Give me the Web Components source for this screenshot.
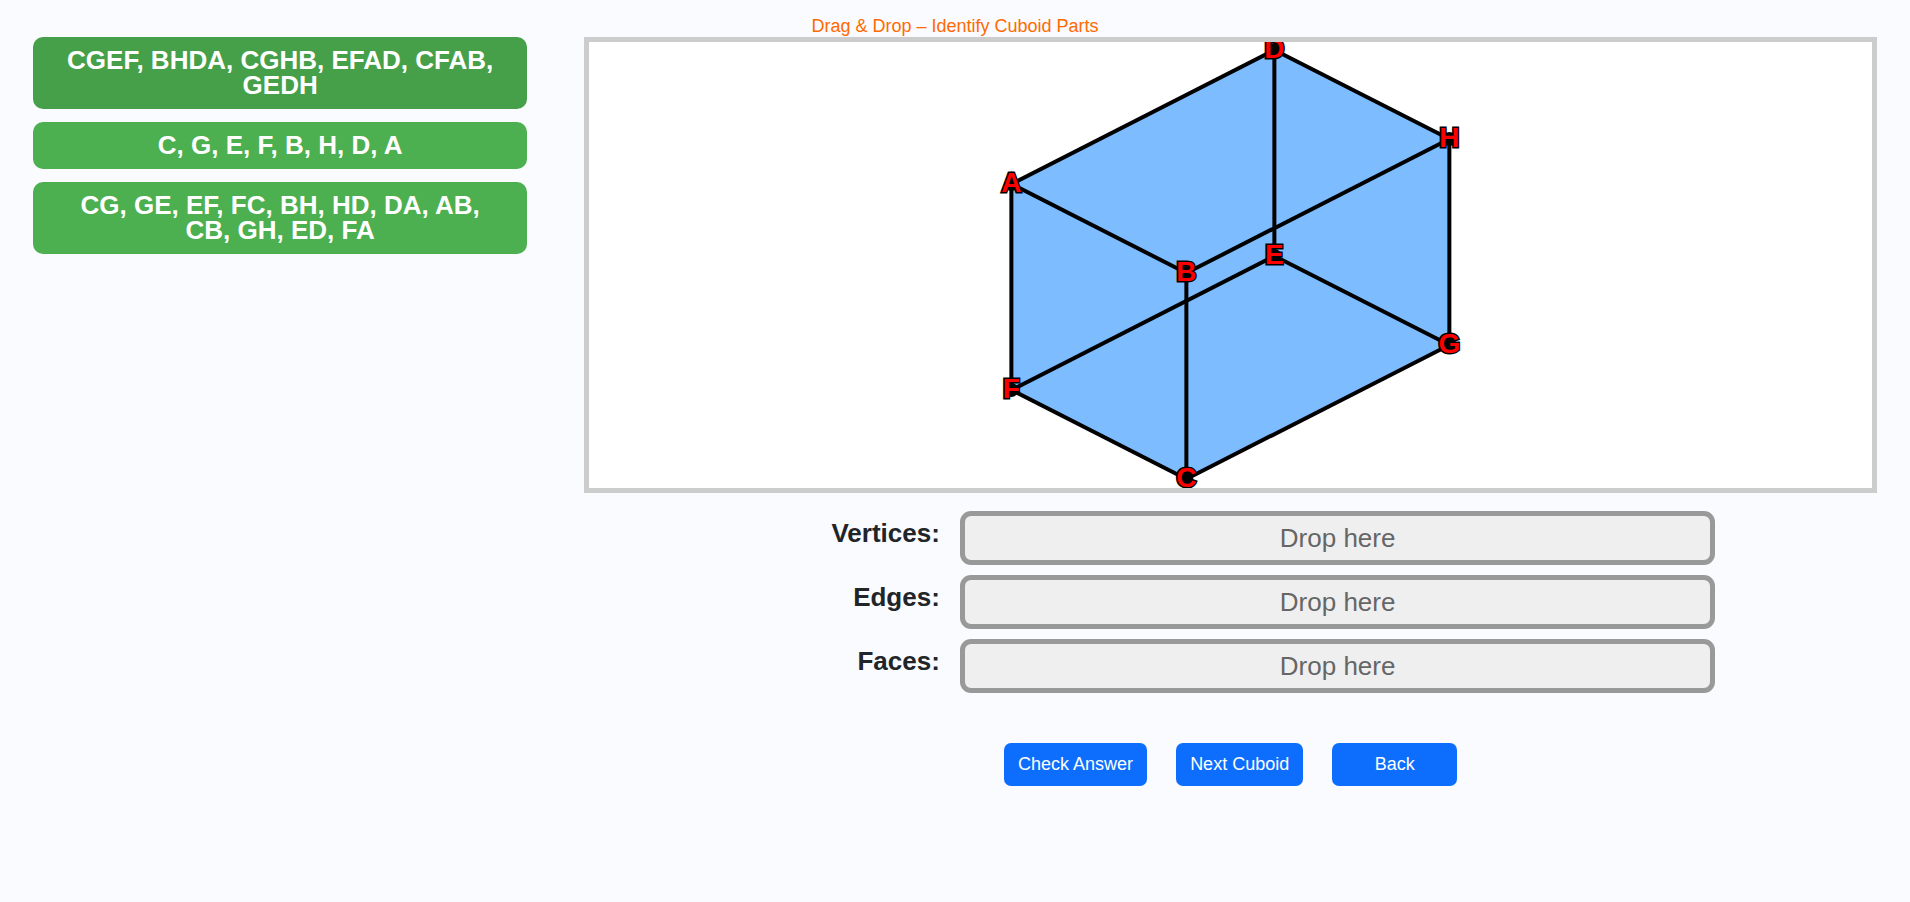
<!DOCTYPE html>
<html lang="en">
<head>
<meta charset="UTF-8">
<meta name="viewport" content="width=device-width, initial-scale=1.0">
<title>Drag &amp; Drop – Identify Cuboid Parts</title>
<style>
  body {
    margin: 0;
    background: #fafbff;
    color: #212529;
    font-family: Arial, "Liberation Sans", sans-serif;
  }
</style>
</head>
<body>
<cuboid-game>
  <span slot="title">Drag &amp; Drop – Identify Cuboid Parts</span>
  <drag-card slot="cards" kind="faces" active>CGEF, BHDA, CGHB, EFAD, CFAB, GEDH</drag-card>
  <drag-card slot="cards" kind="vertices">C, G, E, F, B, H, D, A</drag-card>
  <drag-card slot="cards" kind="edges">CG, GE, EF, FC, BH, HD, DA, AB, CB, GH, ED, FA</drag-card>
  <cuboid-figure slot="figure"></cuboid-figure>
  <drop-row slot="rows" kind="vertices">Vertices:</drop-row>
  <drop-row slot="rows" kind="edges">Edges:</drop-row>
  <drop-row slot="rows" kind="faces">Faces:</drop-row>
  <action-button slot="actions" action="check">Check Answer</action-button>
  <action-button slot="actions" action="next">Next Cuboid</action-button>
  <action-button slot="actions" action="back">Back</action-button>
</cuboid-game>

<script>
class DragCard extends HTMLElement {
    constructor() {
        super()
        this.attachShadow({ mode: 'open' })
    }

    connectedCallback() {
        this.draggable = true
        this.render()
        this.addEventListener('dragstart', (e) => {
            e.dataTransfer.setData('text/plain', this.getAttribute('kind'))
        })
    }

    render() {
        this.shadowRoot.innerHTML = `
      <style>
        :host {
          display: block;
          padding: 11px 24px;
          border-radius: 10px;
          background: #4caf50;
          color: #fff;
          font-size: 26px;
          font-weight: bold;
          line-height: 25px;
          text-align: center;
          cursor: grab;
          user-select: none;
        }
        :host([active]), :host(:hover) { background: #46a049; }
      </style>
      <slot></slot>
    `;
    }
}

class DropRow extends HTMLElement {
    constructor() {
        super()
        this.attachShadow({ mode: 'open' })
    }

    connectedCallback() {
        this.render()
        const zone = this.shadowRoot.querySelector('#zone')
        zone.addEventListener('dragover', (e) => e.preventDefault())
        zone.addEventListener('drop', (e) => {
            e.preventDefault()
            const kind = e.dataTransfer.getData('text/plain')
            const card = document.querySelector(`drag-card[kind="${kind}"]`)
            if (!card) return
            zone.textContent = card.textContent
            this.value = kind
        })
    }

    mark() {
        const zone = this.shadowRoot.querySelector('#zone')
        zone.className = this.value === this.getAttribute('kind') ? 'right' : 'wrong'
    }

    reset() {
        this.value = ''
        const zone = this.shadowRoot.querySelector('#zone')
        zone.className = ''
        zone.textContent = 'Drop here'
    }

    render() {
        this.shadowRoot.innerHTML = `
      <style>
        :host {
          display: grid;
          grid-template-columns: 8fr 17fr;
          column-gap: 20px;
          align-items: start;
          font-size: 26px;
        }
        label {
          font-weight: bold;
          line-height: 44px;
          text-align: right;
        }
        output {
          display: block;
          padding: 7px 12px;
          border: 5px solid #999;
          border-radius: 11px;
          background: #efefef;
          color: #666;
          line-height: 30px;
          text-align: center;
        }
        .right { border-color: #4caf50; }
        .wrong { border-color: #dc3545; }
      </style>
      <label for="zone"><slot></slot></label>
      <output id="zone">Drop here</output>
    `;
    }
}

class ActionButton extends HTMLElement {
    constructor() {
        super()
        this.attachShadow({ mode: 'open' })
    }

    connectedCallback() {
        this.render()
    }

    render() {
        this.shadowRoot.innerHTML = `
      <style>
        :host { display: block; }
        button {
          min-width: 125px;
          padding: 11px 14px;
          border: 0;
          border-radius: 7px;
          background: #0d6efd;
          color: #fff;
          font-family: inherit;
          font-size: 18px;
          line-height: 21px;
          cursor: pointer;
        }
        button:hover { background: #0b5ed7; }
      </style>
      <button type="button"><slot></slot></button>
    `;
    }
}

class CuboidFigure extends HTMLElement {
    constructor() {
        super()
        this.attachShadow({ mode: 'open' })
        this.points = {
            A: [-219, -81], B: [-44, 8], C: [-44, 214], D: [44, -215],
            E: [44, -9], F: [-219, 125], G: [219, 80], H: [219, -126]
        }
        this.edges = ['CG', 'GE', 'EF', 'FC', 'BH', 'HD', 'DA', 'AB', 'CB', 'GH', 'ED', 'FA']
    }

    connectedCallback() {
        this.render()
    }

    render() {
        const p = this.points
        const outline = ['A', 'D', 'H', 'G', 'C', 'F'].map((k) => p[k].join()).join(' ')
        const lines = this.edges.map(([a, b]) =>
            `<line x1="${p[a][0]}" y1="${p[a][1]}" x2="${p[b][0]}" y2="${p[b][1]}"/>`).join('')
        const dots = Object.values(p).map(([x, y]) => `<circle cx="${x}" cy="${y}" r="7"/>`).join('')
        const names = Object.keys(p).map((k) =>
            `<text x="${p[k][0]}" y="${p[k][1] + 8}">${k}</text>`).join('')

        this.shadowRoot.innerHTML = `
      <style>
        :host {
          display: block;
          border: 5px solid #ccc;
          background: #fff;
        }
        svg {
          display: block;
          width: 100%;
          height: 446px;
        }
        polygon { fill: #7dbdff; }
        line { stroke: #000; stroke-width: 4; }
        /* outline goes under the fill so the red stays full width */
        text {
          fill: #f00;
          stroke: #000;
          stroke-width: 3;
          paint-order: stroke;
          font-size: 28px;
          font-weight: bold;
          text-anchor: middle;
        }
      </style>
      <svg viewBox="-240 -223 480 446" role="img" aria-label="Cuboid">
        <polygon points="${outline}"/>
        ${lines}
        ${dots}
        ${names}
      </svg>
    `;
    }
}

class CuboidGame extends HTMLElement {
    constructor() {
        super()
        this.attachShadow({ mode: 'open' })
    }

    connectedCallback() {
        this.render()
        this.addEventListener('click', (e) => {
            const button = e.target.closest('action-button')
            if (!button) return
            const action = button.getAttribute('action')
            const rows = this.querySelectorAll('drop-row')
            if (action === 'check') rows.forEach((row) => row.mark())
            if (action === 'next') rows.forEach((row) => row.reset())
            if (action === 'back') history.back()
        })
    }

    render() {
        this.shadowRoot.innerHTML = `
      <style>
        :host {
          display: block;
          padding: 15px 33px;
        }
        h1 {
          margin: 0;
          color: #ff6a00;
          font-size: 18px;
          font-weight: normal;
          line-height: 22px;
          text-align: center;
        }
        main {
          display: grid;
          grid-template-columns: 13fr 34fr;
          column-gap: 57px;
          align-items: start;
        }
        .cards {
          display: flex;
          flex-direction: column;
          gap: 13px;
        }
        .rows {
          display: flex;
          flex-direction: column;
          gap: 10px;
          padding: 18px 12.5% 50px 0;
        }
        .actions {
          display: flex;
          justify-content: center;
          gap: 29px;
        }
      </style>
      <h1><slot name="title"></slot></h1>
      <main>
        <div class="cards"><slot name="cards"></slot></div>
        <section>
          <slot name="figure"></slot>
          <div class="rows"><slot name="rows"></slot></div>
          <div class="actions"><slot name="actions"></slot></div>
        </section>
      </main>
    `;
    }
}

customElements.define('drag-card', DragCard)
customElements.define('drop-row', DropRow)
customElements.define('action-button', ActionButton)
customElements.define('cuboid-figure', CuboidFigure)
customElements.define('cuboid-game', CuboidGame)
</script>
</body>
</html>
